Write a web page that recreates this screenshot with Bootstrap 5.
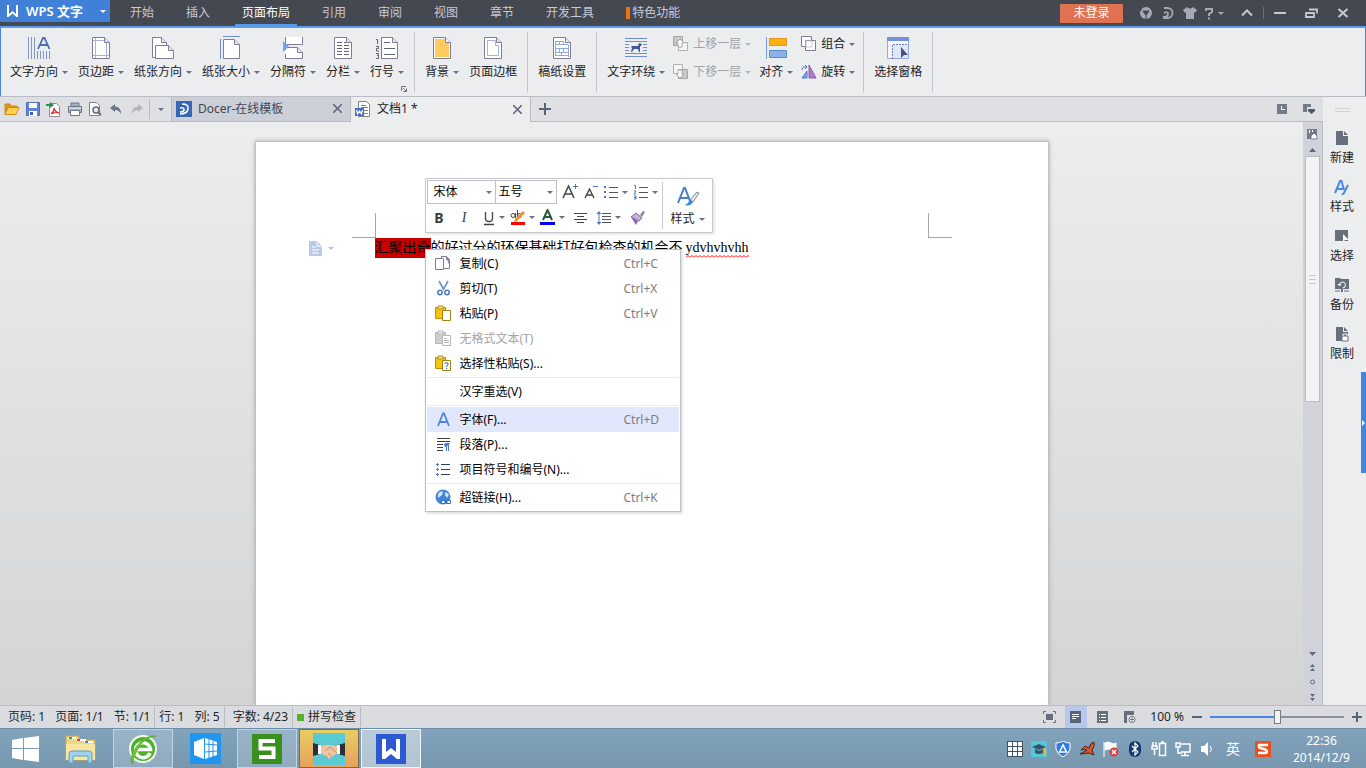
<!DOCTYPE html>
<html lang="zh-CN">
<head>
<meta charset="utf-8">
<meta name="viewport" content="width=device-width, initial-scale=1">
<title>WPS 文字 - 文档1</title>
<link href="https://cdn.jsdelivr.net/npm/bootstrap@5.3.0/dist/css/bootstrap.min.css" rel="stylesheet">
<style>
body{font:12px/20px "Noto Sans","Noto Sans CJK SC",sans-serif;color:#1e2226;background:#ebedef;overflow:hidden}
button{border:0;background:none;padding:0;color:inherit;font:inherit;white-space:nowrap}
svg{display:block;flex:none}
.caret{display:inline-block;flex:none;width:6px;height:3px;border:3px solid transparent;border-top-color:#66708a;border-bottom:0}
/* title bar */
.titlebar{background:#444851;height:28px;border-bottom:2px solid #5a9cec}
.brand{background:#4080d6;width:110px;height:22px;padding-left:6px;gap:7px;color:#fff;font-size:13px;font-weight:600}
.brand .caret,.help .caret{border-top-color:currentColor}
.menutab{color:#c5cad6;text-decoration:none;padding:0 7px;margin:0 9px;height:28px;line-height:26px;white-space:nowrap}
.menutab.active{color:#fff;border-bottom:4px solid #5a9cec}
.feature{border-left:4px solid #f0720d;padding-left:2px;line-height:12px;display:inline-block}
.login{background:#e07252;color:#fff;width:63px;height:19px;line-height:18px;border-radius:1px}
.sysicons{color:#a3a9b7}
.sysicons button{width:22px}
.winbtns{color:#c3c8d2;padding-right:7px}
.winbtns button{width:32px}
.winbtns .divided{border-left:1px solid #6a6f79;height:12px}
/* ribbon */
.ribbon{height:69px;border:solid #b9bcc3;border-width:0 0 1px;box-shadow:inset 1px 0 #4a82cc,inset -1px 0 #4a82cc}
.rgroup{display:flex;align-items:flex-start;padding:0 5px;height:60px;margin-top:4px;border-right:1px solid #c3c6cd}
.rbtn{padding:3px 5px 0}
.rbtn svg{margin:0 auto 1px}
.rlabel{display:flex;align-items:center;gap:4px}
.rstack{display:flex;flex-direction:column;margin-top:-2px}
.rsmall{display:flex;align-items:center;gap:4px;height:28px;padding:0 3px}
.off{color:#a2a4a9}
.off .caret{border-top-color:#b7b9be}
.launcher{right:7px;bottom:0}
/* document tabs */
.quickbar{background:#dee0e4;height:25px;border-bottom:1px solid #b9bcc3}
.quicktools{width:171px;padding-left:2px}
.quicktools button{width:21px;display:flex;justify-content:center}
.quicktools .vr{width:1px;height:20px;background:#b9bcc3;opacity:1;margin:0 0 0 2px}
.doctab{width:180px;height:25px;padding:0 8px 0 4px;gap:6px;border-right:1px solid #b9bcc3;border-left:1px solid #b9bcc3}
.doctab.idle{background:#cccfd7;color:#44484f;border-bottom:1px solid #b9bcc3}
.doctab.current{background:#ebedef;border-left:0}
/* workspace */
.workspace{background:linear-gradient(#ebedee,#d4d4d5);padding-top:19px}
.paper{width:794px;background:#fff;border:1px solid #bfc0c4;border-bottom:0;box-shadow:0 0 4px #aaa;padding-top:71px}
.marks{padding:0 96px;height:25px}
.marks span{width:24px;border:0 solid #a5a5a5;border-bottom-width:1px}
.marks .at-left{border-right-width:1px}
.marks .at-right{border-left-width:1px}
.docline{height:20px;padding-left:53px;font:14px/20px "Liberation Serif","Noto Sans CJK SC",serif;color:#000}
.lineicon{width:66px;display:flex;align-items:center;gap:6px}
.lineicon .caret{border-top-color:#b9c0ce}
.picked{background:#c80000}
.misspelt{margin-left:3px;background:repeat-x left bottom url("data:image/svg+xml,%3Csvg xmlns='http://www.w3.org/2000/svg' width='4' height='3'%3E%3Cpath d='M0 2.5L2 .5L4 2.5' fill='none' stroke='red'/%3E%3C/svg%3E")}
.floatbar{left:169px;top:36px;width:288px;height:55px;padding:1px;background:#fff;border:1px solid #c9c9cc;box-shadow:1px 1px 3px #0002;z-index:2}
.floatbar select{appearance:none;border:1px solid #bdc0cf;border-radius:0;height:24px;padding:0 6px;font:inherit;color:#000;background:#fff no-repeat right 3px center url("data:image/svg+xml,%3Csvg xmlns='http://www.w3.org/2000/svg' width='6' height='3'%3E%3Cpath d='M0 0h6L3 3z' fill='%2366708a'/%3E%3C/svg%3E")}
.floatbar .fontname{width:69px}
.floatbar .fontsize{width:62px;margin-left:-1px;padding-left:3px}
.barrow{gap:5px}
.barrow button{display:flex;align-items:center;gap:3px}
.barrow .glyph{width:25px;justify-content:center;font-size:14px;color:#3c3c3c}
.glyph i{font-family:"Liberation Serif",serif}
.stylebox{border-left:1px solid #c9c9cc;margin:2px 0 2px 4px;padding:1px 8px}
.ctxmenu{left:169px;top:107px;width:256px;padding:1px;background:#fff;border:1px solid #c0c0c4;box-shadow:1px 1px 3px #0003;z-index:3;color:#000}
.ctxmenu button{display:flex;align-items:center;width:100%;height:25px;padding:0 17px 0 8px;text-align:left}
.ctxmenu svg,.ctxmenu .noicon{width:17px;margin-right:8px}
.ctxmenu kbd{margin-left:auto;width:38px;padding:0;background:none;color:#7d7d7d;font:inherit}
.ctxmenu hr{margin:1px 0;border-color:#ebebee;opacity:1}
.ctxmenu .hot{background:#e1e7fd}
.ctxmenu .off{color:#a4a4a4}
/* scroll bar and task pane */
.vscroll{width:20px;background:#d1d3da;border-right:1px solid #b9bcc3;padding:7px 0 2px;color:#5f6983}
.thumb{width:15px;height:246px;background:#f4f4f4;border:1px solid #b9bcc3}
.thumb i{width:7px;height:9px;border:solid #c8c8cb;border-width:1px 0;background:linear-gradient(#c8c8cb,#c8c8cb) center/7px 1px no-repeat}
.taskpane{width:43px;gap:9px;padding:11px 5px 0 0}
.grip{width:15px;height:4px;border:solid #d0d2d7;border-width:1px 0;margin-bottom:7px}
.taskpane button{height:40px;line-height:20px}
.taskpane button svg{margin:2px auto}
.pulltab{right:0;top:275px;width:5px;height:101px;background:#4084e6}
/* status bar */
.statusbar{height:23px;background:#dbdce0;border-top:1px solid #b9bcc3;color:#22262c}
.statusbar span{white-space:nowrap}
.cell{display:flex;align-items:center;gap:10px;border-right:1px solid #b9bcc3;height:20px;padding:0 4px}
.cell.tight{gap:4px}
.view{width:22px;height:22px;display:flex;align-items:center;justify-content:center;margin-right:5px}
.view.on{background:#b7c8ea}
.zoomer{appearance:none;width:134px;height:14px;background:linear-gradient(90deg,#4a86e0 50%,#8a909e 50%) center/100% 2px no-repeat}
.zoomer::-webkit-slider-thumb{appearance:none;width:7px;height:14px;background:#f3f3f3;border:1px solid #777c86}
/* system task bar */
.taskbar{height:40px;background:linear-gradient(#82a3bd,#7797ae);border-top:1px solid #6d8ca5;color:#fff}
.app{width:60px;height:39px;display:flex;align-items:center;justify-content:center;border:1px solid transparent;margin-right:2px}
.app.start{width:51px;margin-right:0}
.app.open{background:#ffffff30;border-color:#c2d3e2}
.app.alert-app{background:linear-gradient(#e8cf63,#e8a05c);border-color:#fbe7bd;outline:1px solid #7c6a50;outline-offset:-1px}
.app.front{background:#ffffff70;border-color:#eef4f9}
.tray button{width:24px;display:flex;justify-content:center}
.tray .ime{width:28px;font-size:14px}
.clock{width:91px;line-height:17px;padding-left:2px}
</style>
<script src="https://cdn.jsdelivr.net/npm/bootstrap@5.3.0/dist/js/bootstrap.bundle.min.js"></script>
</head>
<body class="d-flex flex-column vh-100">

<header class="titlebar d-flex flex-nowrap">
  <button class="brand d-flex align-items-center"><svg width="13" height="14" viewBox="0 0 13 14"><path d="M1 1h2v9l3.500-3 3.500 3V1h2v12h-1.500L6.500 9.500 2.500 13H1z" fill="#fff"/></svg>WPS 文字<span class="caret ms-auto me-1"></span></button>
  <nav class="d-flex flex-nowrap ms-1" aria-label="功能区">
    <a class="menutab" href="#">开始</a><a class="menutab" href="#">插入</a><a class="menutab active" href="#">页面布局</a><a class="menutab" href="#">引用</a><a class="menutab" href="#">审阅</a><a class="menutab" href="#">视图</a><a class="menutab" href="#">章节</a><a class="menutab" href="#">开发工具</a><a class="menutab" href="#"><span class="feature">特色功能</span></a>
  </nav>
  <div class="d-flex align-items-center ms-auto">
    <button class="login me-2">未登录</button>
    <div class="sysicons d-flex align-items-center ms-1">
      <button aria-label="社区"><svg width="14" height="14" viewBox="0 0 14 14" class="m-auto"><circle cx="7" cy="7" r="6" fill="currentColor"/><path d="M4 5h6l-3 4.500zM1 4h2M11 3l2-1M7 10v3" fill="#444851" stroke="#444851"/></svg></button>
      <button aria-label="Docer"><svg width="14" height="14" viewBox="0 0 14 14" class="m-auto"><path d="M3 2h3.500a5 5 0 010 10H2M2 11q5 0 5-3t-4-1" fill="none" stroke="currentColor" stroke-width="1.800"/></svg></button>
      <button aria-label="皮肤"><svg width="14" height="14" viewBox="0 0 14 14" class="m-auto"><path d="M4 1l-4 3 2 3 1-1v7h8V6l1 1 2-3-4-3q-3 3-6 0z" fill="currentColor"/></svg></button>
      <button aria-label="帮助" class="help d-flex align-items-center gap-1 ms-1"><svg width="9" height="13" viewBox="0 0 9 13"><path d="M1 4V2h6v3L4 7v2M4 10.500v2" fill="none" stroke="currentColor" stroke-width="2"/></svg><span class="caret"></span></button>
    </div>
    <div class="winbtns d-flex align-items-center ms-1">
      <button aria-label="折叠"><svg width="14" height="12" viewBox="0 0 14 12" class="m-auto"><path d="M2 8.500l5-5 5 5" fill="none" stroke="currentColor" stroke-width="2"/></svg></button>
      <button aria-label="最小化" class="divided"><svg width="12" height="12" viewBox="0 0 12 12" class="m-auto"><path d="M0 6h12" stroke="currentColor" stroke-width="2"/></svg></button>
      <button aria-label="还原"><svg width="13" height="12" viewBox="0 0 13 12" class="m-auto"><path d="M4 2.500h8v4M1 6h8v4H1z" fill="none" stroke="currentColor" stroke-width="1.800"/></svg></button>
      <button aria-label="关闭"><svg width="12" height="12" viewBox="0 0 12 12" class="m-auto"><path d="M1.500 2l9 8m0-8l-9 8" stroke="currentColor" stroke-width="2.200"/></svg></button>
    </div>
  </div>
</header>

<section class="ribbon d-flex flex-nowrap flex-shrink-0" aria-label="页面布局">
  <div class="rgroup position-relative">
    <button class="rbtn"><svg width="26" height="26" viewBox="0 0 26 26"><path d="M2.500 2v22m3-22v22m3-22v22m3-8v8m3-8v8m3-8v8m3-8v8m3-8v8" stroke="#7f98cc" shape-rendering="crispEdges"/><path d="M12 14l5-11h1.500l5 11m-9.500-4h8" fill="none" stroke="#4a6fb5" stroke-width="1.800"/></svg><span class="rlabel">文字方向<span class="caret"></span></span></button>
    <button class="rbtn"><svg width="26" height="26" viewBox="0 0 26 26"><path d="M4.500 2.500h12l5 5v16h-17z" fill="#fff" stroke="#807c95"/><path d="M16.500 2.500v5h5" fill="#e4e8f8" stroke="#807c95"/><path d="M7.500 3v20m11-15v15M5 5.500h11M5 20.500h16" stroke="#9fb4e6"/></svg><span class="rlabel">页边距<span class="caret"></span></span></button>
    <button class="rbtn"><svg width="26" height="26" viewBox="0 0 26 26"><path d="M2.500 2.500h9l5 5v15h-14z" fill="#fff" stroke="#807c95"/><path d="M11.500 2.500v5h5" fill="#e4e8f8" stroke="#807c95"/><path d="M5.500 10.500h13l5 5v8h-18z" fill="#fff" stroke="#807c95"/><path d="M18.500 10.500v5h5" fill="#e4e8f8" stroke="#807c95"/></svg><span class="rlabel">纸张方向<span class="caret"></span></span></button>
    <button class="rbtn"><svg width="26" height="26" viewBox="0 0 26 26"><path d="M5 1.500h17M2.500 4v20" stroke="#6d90d8"/><path d="M5.500 4.500h11l5 5v14h-16z" fill="#fff" stroke="#807c95"/><path d="M16.500 4.500v5h5" fill="#e4e8f8" stroke="#807c95"/></svg><span class="rlabel">纸张大小<span class="caret"></span></span></button>
    <button class="rbtn"><svg width="26" height="26" viewBox="0 0 26 26"><path d="M5.500 2v7.500h17V2M5.500 15V12.500h12l5 5v6h-17V19" fill="#fff" stroke="#807c95"/><path d="M17.500 12.500v5h5" fill="#e4e8f8" stroke="#807c95"/><path d="M3 6v11l6-5.500z" fill="#7b9fe8"/></svg><span class="rlabel">分隔符<span class="caret"></span></span></button>
    <button class="rbtn"><svg width="26" height="26" viewBox="0 0 26 26"><path d="M4.500 2.500h12l5 5v16h-17z" fill="#fff" stroke="#807c95"/><path d="M16.500 2.500v5h5" fill="#e4e8f8" stroke="#807c95"/><path d="M7 7.500h5m2 0h2m-9 3h5m2 0h5m-12 3h5m2 0h5m-12 3h5m2 0h5m-12 3h5m2 0h5" stroke="#5d6474"/></svg><span class="rlabel">分栏<span class="caret"></span></span></button>
    <button class="rbtn"><svg width="26" height="26" viewBox="0 0 26 26"><path d="M7.500 2.500h11l5 5v16h-16z" fill="#fff" stroke="#807c95"/><path d="M18.500 2.500v5h5" fill="#e4e8f8" stroke="#807c95"/><path d="M10 7.500h6m-6 6h11m-11 6h11M2 4.500h1.500V9M2 11.500h2.500v2h-2V16H5m-3 2.500h2.500v2H3m1.500 0v3H2" fill="none" stroke="#5d6474"/></svg><span class="rlabel">行号<span class="caret"></span></span></button>
    <button class="launcher position-absolute" aria-label="页面设置"><svg width="6" height="6" viewBox="0 0 6 6"><path d="M.5 5V.5H5M2 2l3.500 3.500m0-3v3h-3" fill="none" stroke="#6a7386"/></svg></button>
  </div>
  <div class="rgroup">
    <button class="rbtn"><svg width="26" height="26" viewBox="0 0 26 26"><path d="M4.500 2.500h12l5 5v16h-17z" fill="#fff" stroke="#807c95"/><path d="M6 4h10v4h4v14H6z" fill="#ffcb60"/><path d="M16.500 2.500v5h5" fill="#fff" stroke="#807c95"/></svg><span class="rlabel">背景<span class="caret"></span></span></button>
    <button class="rbtn"><svg width="26" height="26" viewBox="0 0 26 26"><path d="M4.500 2.500h12l5 5v16h-17z" fill="#fff" stroke="#807c95"/><path d="M7.500 5.500h8v5h3v10h-11z" fill="none" stroke="#9fb4e6"/><path d="M16.500 2.500v5h5" fill="#e4e8f8" stroke="#807c95"/></svg><span class="rlabel">页面边框</span></button>
  </div>
  <div class="rgroup">
    <button class="rbtn"><svg width="26" height="26" viewBox="0 0 26 26"><path d="M4.500 2.500h12l5 5v16h-17z" fill="#fff" stroke="#807c95"/><path d="M16.500 2.500v5h5" fill="#e4e8f8" stroke="#807c95"/><path d="M6.500 6.500h8m-8 3h13m-13 4h13m-13 4h13m-13 3h13M6.500 6v15m4-15v4m0 4v3m4-11v4m0 4v3m5-7v12m-7-4v3m-2-10" fill="none" stroke="#90a8de"/></svg><span class="rlabel">稿纸设置</span></button>
  </div>
  <div class="rgroup">
    <button class="rbtn"><svg width="26" height="26" viewBox="0 0 26 26"><path d="M2 3.500h22M2 6.500h22M2 9.500h4m14 0h4M2 12.500h4m14 0h4M2 15.500h4m14 0h4M2 18.500h22M2 21.500h22" stroke="#6f8fce"/><path d="M8 12l1-1h6l1-3 3 1-2 3v5h-1l-1-3h-4l-2 3H8l1-4z" fill="#3c5a98"/></svg><span class="rlabel">文字环绕<span class="caret"></span></span></button>
    <div class="rstack">
      <button class="rsmall off" disabled><svg width="16" height="16" viewBox="0 0 16 16"><path d="M.5.500h9v9h-9z" fill="#c7c8ca" stroke="#a6a6aa"/><path d="M5.500 6.500h9v8h-9z" fill="#f5f5f5" stroke="#b0b0b4"/><path d="M7 3l4 4H9v4H5V7H3z" fill="#fff" stroke="#a6a6aa"/></svg>上移一层<span class="caret"></span></button>
      <button class="rsmall off" disabled><svg width="16" height="16" viewBox="0 0 16 16"><path d="M.5.500h9v9h-9z" fill="#f5f5f5" stroke="#b0b0b4"/><path d="M5.500 5.500h9v9h-9z" fill="#c7c8ca" stroke="#a6a6aa"/><path d="M7 14l4-4H9V6H5v4H3z" fill="#fff" stroke="#a6a6aa"/></svg>下移一层<span class="caret"></span></button>
    </div>
    <button class="rbtn"><svg width="26" height="26" viewBox="0 0 26 26"><path d="M3.500 2v22" stroke="#7b9ad6"/><path d="M6.500 3.500h17v7h-17z" fill="#ffb010" stroke="#e8941c"/><path d="M6.500 15.500h17v7h-17z" fill="#8ab2e6" stroke="#5a8cc8"/></svg><span class="rlabel">对齐<span class="caret"></span></span></button>
    <div class="rstack">
      <button class="rsmall"><svg width="16" height="16" viewBox="0 0 16 16"><path d="M.5.500h10v10H.5zM4.500 4.500h10v10h-10z" fill="#fff" stroke="#7c7b92"/><path d="M5 5h6v6H5z" fill="#fff" stroke="#c8c8d4"/></svg>组合<span class="caret"></span></button>
      <button class="rsmall"><svg width="16" height="16" viewBox="0 0 16 16"><path d="M8 1v13h7z" fill="#b578cc" stroke="#9060ae"/><path d="M6 7v7H1z" fill="#7eaae8" stroke="#4a7cc4"/><path d="M1 6q0-4 4-3m-1-2l2 2-2 2" fill="none" stroke="#3c76c4"/></svg>旋转<span class="caret"></span></button>
    </div>
  </div>
  <div class="rgroup">
    <button class="rbtn"><svg width="26" height="26" viewBox="0 0 26 26"><path d="M2.500 2.500h21v21h-21z" fill="#f4f6fc" stroke="#98acdc"/><path d="M2 2h22v4H2z" fill="#7292d6"/><path d="M7 10h16v13H7z" fill="#dfe7fa"/><path d="M7.500 24V9.500H24" fill="none" stroke="#6a84c0" stroke-dasharray="2 1"/><path d="M16 12v11l3-3h4z" fill="#46557e"/></svg><span class="rlabel">选择窗格</span></button>
  </div>
</section>

<div class="d-flex flex-grow-1 overflow-hidden position-relative">
  <div class="d-flex flex-column flex-grow-1">
    <div class="quickbar d-flex align-items-center flex-shrink-0">
      <div class="quicktools d-flex align-items-center flex-shrink-0">
        <button aria-label="打开"><svg width="16" height="14" viewBox="0 0 16 14"><path d="M1 12V2h5l1 2h6v2" fill="#d99a1c" stroke="#c88a14"/><path d="M1 12.500l3-7h11l-3 7z" fill="#ffd050" stroke="#cf9018"/></svg></button>
        <button aria-label="保存"><svg width="14" height="14" viewBox="0 0 14 14"><path d="M.5.500h13v13H.5z" fill="#6584d4" stroke="#4f6ec0"/><path d="M3 1h8v5H3zM3 9h8v5H3z" fill="#fff"/><path d="M4 10h3v3H4z" fill="#3f60b4"/></svg></button>
        <button aria-label="输出为PDF"><svg width="15" height="15" viewBox="0 0 15 15"><path d="M3.500 1.500h7l3 3v10h-10z" fill="#fff" stroke="#8d8f9a"/><path d="M5 12q3-2 3-6 1 4 5 5-4-1-8 1" fill="none" stroke="#dc3838" stroke-width="1.300"/><path d="M0 2h4V0l4 3-4 3V4H0z" fill="#2f8c50"/></svg></button>
        <button aria-label="打印"><svg width="14" height="14" viewBox="0 0 14 14"><path d="M3 1h8v4H3zM.5 4.500h13v6H.5z" fill="#a7afbf" stroke="#6c768a"/><path d="M1 6h12" stroke="#fff"/><path d="M2.500 8.500h9v5h-9z" fill="#fff" stroke="#6c768a"/></svg></button>
        <button aria-label="打印预览"><svg width="14" height="14" viewBox="0 0 14 14"><path d="M1.500.500h7l3 3v10h-10z" fill="#fff" stroke="#80838e"/><circle cx="8" cy="8" r="3" fill="#e8ebf0" stroke="#666b78" stroke-width="1.500"/><path d="M10 10l3 3" stroke="#666b78" stroke-width="2"/></svg></button>
        <button aria-label="撤销"><svg width="12" height="12" viewBox="0 0 12 12"><path d="M0 5l5-4v2.500q6 0 6 7.500-2-4-6-4v2z" fill="#6c7689"/></svg></button>
        <button aria-label="恢复"><svg width="12" height="12" viewBox="0 0 12 12"><path d="M12 5L7 1v2.500q-6 0-6 7.500 2-4 6-4v2z" fill="#b0b4bc"/></svg></button>
        <span class="vr"></span>
        <button aria-label="自定义"><span class="caret"></span></button>
      </div>
      <div class="doctab idle d-flex align-items-center"><svg width="16" height="16" viewBox="0 0 16 16"><path d="M0 0h16v16H0z" fill="#3766b4"/><path d="M6 3q7 0 6 5t-8 5M4 11q4 0 4-2.500T4 7" fill="none" stroke="#fff" stroke-width="1.600"/></svg><span>Docer-在线模板</span><button class="ms-auto" aria-label="关闭"><svg width="9" height="9" viewBox="0 0 9 9"><path d="M0 0l9 9M9 0L0 9" stroke="#5a6274" stroke-width="1.500"/></svg></button></div>
      <div class="doctab current d-flex align-items-center"><svg width="16" height="16" viewBox="0 0 16 16"><path d="M3.500.500h8l3 3v12h-11z" fill="#fff" stroke="#80838e"/><path d="M6 4.500h5m-5 2h7m-4 3h4m-4 3h4" stroke="#80838e"/><path d="M0 7h9v8H0z" fill="#3f6dc0"/><path d="M1.500 9l1 4 2-3 2 3 1-4" fill="none" stroke="#fff" stroke-width="1.300"/></svg><span>文档1 *</span><button class="ms-auto" aria-label="关闭"><svg width="9" height="9" viewBox="0 0 9 9"><path d="M0 0l9 9M9 0L0 9" stroke="#5a6274" stroke-width="1.500"/></svg></button></div>
      <button class="ms-2" aria-label="新建标签"><svg width="12" height="12" viewBox="0 0 12 12"><path d="M6 0v12M0 6h12" stroke="#5a6274" stroke-width="2"/></svg></button>
      <div class="d-flex ms-auto me-2 gap-3">
        <button aria-label="历史"><svg width="10" height="10" viewBox="0 0 10 10"><path d="M0 0h10v10H0z" fill="#747c8c"/><path d="M4.500 2v3.500H8" fill="none" stroke="#fff"/></svg></button>
        <button aria-label="标签列表"><svg width="12" height="10" viewBox="0 0 12 10"><path d="M0 0h8v3H4v5H0z" fill="#747c8c"/><path d="M5 5h7v2L8.500 10 5 7z" fill="#4f5a70"/></svg></button>
      </div>
    </div>
    <div class="d-flex flex-grow-1 overflow-hidden">
      <main class="workspace d-flex flex-grow-1 justify-content-center">
        <article class="paper position-relative flex-shrink-0">
          <div class="marks d-flex justify-content-between"><span class="at-left"></span><span class="at-right"></span></div>
          <div class="docline d-flex">
            <span class="lineicon"><svg width="13" height="15" viewBox="0 0 13 15"><path d="M0 0h8l5 5v10H0z" fill="#b9cbe6"/><path d="M8 0v5h5M3 6h4m-4 3h7m-7 3h7" fill="none" stroke="#fff"/></svg><span class="caret"></span></span>
            <span class="picked">汇聚出奇</span><span>的好过分的环保基础打好包检查的机会不</span><span class="misspelt">ydvhvhvhh</span>
          </div>

          <div class="floatbar position-absolute d-flex">
            <div class="d-flex flex-column">
              <div class="barrow d-flex align-items-center">
                <div class="d-flex"><select class="fontname" aria-label="字体"><option>宋体</option></select><select class="fontsize" aria-label="字号"><option>五号</option></select></div>
                <button aria-label="增大字号"><svg width="17" height="18" viewBox="0 0 17 18"><path d="M1 15L6.500 3 12 15M3 11h7" fill="none" stroke="#444" stroke-width="1.500"/><path d="M13.500 1v5M11 3.500h5" stroke="#4a78c8"/></svg></button>
                <button aria-label="减小字号"><svg width="14" height="18" viewBox="0 0 14 18"><path d="M1 15L5.500 6 10 15M2.500 12h6" fill="none" stroke="#444" stroke-width="1.400"/><path d="M9 3.500h5" stroke="#4a78c8"/></svg></button>
                <button aria-label="项目符号"><svg width="16" height="16" viewBox="0 0 16 16"><path d="M6 3.500h9M6 8.500h9M6 13.500h9" stroke="#555"/><path d="M1 2h2v2H1zM1 7h2v2H1zM1 12h2v2H1z" fill="#4a78c8"/></svg><span class="caret"></span></button>
                <button aria-label="编号"><svg width="16" height="16" viewBox="0 0 16 16"><path d="M6 3.500h9M6 8.500h9M6 13.500h9" stroke="#555"/><path d="M1 1.500h1.500V5M1 7h2l-2 3h2M1 12h2v3H1m0-1.500h2" fill="none" stroke="#4a78c8"/></svg><span class="caret"></span></button>
              </div>
              <div class="barrow d-flex align-items-center flex-grow-1">
                <div class="d-flex"><button class="glyph"><b>B</b></button><button class="glyph"><i>I</i></button></div>
                <button aria-label="下划线"><svg width="14" height="16" viewBox="0 0 14 16"><path d="M3.500 2v6.500q0 3 3.500 3t3.500-3V2M2 14.500h10" fill="none" stroke="#444" stroke-width="1.300"/></svg><span class="caret"></span></button>
                <button aria-label="突出显示"><svg width="16" height="18" viewBox="0 0 16 18"><circle cx="3" cy="6.500" r="2" fill="none" stroke="#444"/><path d="M5.500 4v5M7.500 1v8" stroke="#444"/><circle cx="9.500" cy="6.500" r="2" fill="none" stroke="#444"/><path d="M13 2l2 2-8 8-3 1 1-3z" fill="#f09030"/><path d="M1 13h14v3H1z" fill="#f00"/></svg><span class="caret"></span></button>
                <button aria-label="字体颜色"><svg width="16" height="18" viewBox="0 0 16 18"><path d="M3 11L7.500 1 12 11M4.500 8h6" fill="none" stroke="#2b5a34" stroke-width="2"/><path d="M0 13h15v3H0z" fill="#00f"/></svg><span class="caret"></span></button>
                <button aria-label="居中" class="mx-1"><svg width="13" height="14" viewBox="0 0 13 14"><path d="M0 2.500h13M3 5.500h7M0 8.500h13M3 11.500h7" stroke="#444"/></svg></button>
                <button aria-label="行距"><svg width="16" height="14" viewBox="0 0 16 14"><path d="M6 2.500h9M6 5.500h9M6 8.500h9M6 11.500h9" stroke="#555"/><path d="M3 0l2.500 3h-5zM3 14l2.500-3h-5zM2.500 3h1v8h-1z" fill="#4a78c8"/></svg><span class="caret"></span></button>
                <button aria-label="格式刷" class="ms-1"><svg width="15" height="15" viewBox="0 0 15 15"><path d="M10 5l3-4 2 1-3 5z" fill="#8b8299"/><path d="M1 7l5-4 6 5-3 3z" fill="#c9aee0" stroke="#80709a"/><path d="M1 7l7 4-2 4z" fill="#8563b0"/></svg></button>
              </div>
            </div>
            <button class="stylebox"><svg width="24" height="26" viewBox="0 0 24 26" class="m-auto"><path d="M2 20L8 5h1l5 13M4.500 15h8" fill="none" stroke="#4a7ad0" stroke-width="2"/><path d="M21 9l2 1-6 9-3-2z" fill="#dfe7f2" stroke="#7e8798"/><path d="M14 16l3 3q-3 5-8 3 3-1 5-6" fill="#3d8ed0"/></svg><span class="d-flex align-items-center gap-1">样式<span class="caret"></span></span></button>
          </div>

          <div class="ctxmenu position-absolute" role="menu">
            <button><svg width="17" height="17" viewBox="0 0 17 17"><path d="M6.500 1.500h5l3 3v9h-8z" fill="#fff" stroke="#807c95"/><path d="M11.500 1.500v3h3v5z" fill="#dfe4f6" stroke="#807c95"/><path d="M.5 3.500h8v11h-8z" fill="#fff" stroke="#807c95"/></svg>复制(C)<kbd>Ctrl+C</kbd></button>
            <button><svg width="17" height="17" viewBox="0 0 17 17"><path d="M4 1l5 9m4-9l-5 9" stroke="#6f93c6" stroke-width="1.600"/><circle cx="5" cy="12.500" r="2.200" fill="none" stroke="#4c7cc0" stroke-width="1.500"/><circle cx="12" cy="12.500" r="2.200" fill="none" stroke="#4c7cc0" stroke-width="1.500"/></svg>剪切(T)<kbd>Ctrl+X</kbd></button>
            <button><svg width="17" height="17" viewBox="0 0 17 17"><path d="M.5 2.500h10v11H.5z" fill="#f7c40c" stroke="#bb8e10"/><path d="M3 1h5v3H3z" fill="#efe1a6" stroke="#bb8e10"/><path d="M7.500 5.500h8v10h-8z" fill="#fff" stroke="#a88118"/></svg>粘贴(P)<kbd>Ctrl+V</kbd></button>
            <button class="off" disabled><svg width="17" height="17" viewBox="0 0 17 17"><path d="M.5 2.500h10v11H.5z" fill="#cfcfcf" stroke="#b5b5b5"/><path d="M3 1h5v3H3z" fill="#eee" stroke="#b5b5b5"/><path d="M7.500 5.500h8v10h-8z" fill="#fff" stroke="#b5b5b5"/><path d="M9 8.500h3m-3 2h5m-5 2h5" stroke="#b5b5b5"/></svg>无格式文本(T)</button>
            <button><svg width="17" height="17" viewBox="0 0 17 17"><path d="M.5 2.500h10v11H.5z" fill="#f7c40c" stroke="#bb8e10"/><path d="M3 1h5v3H3z" fill="#efe1a6" stroke="#bb8e10"/><path d="M7.500 5.500h8v10h-8z" fill="#fff" stroke="#a88118"/><path d="M10 9V8h3v2l-1.500 1v1m0 1v1" fill="none" stroke="#3f63b8"/></svg>选择性粘贴(S)...</button>
            <hr>
            <button><span class="noicon"></span>汉字重选(V)</button>
            <hr>
            <button class="hot"><svg width="17" height="17" viewBox="0 0 17 17"><path d="M3 15L8 2.500h1L14 15M4.500 11h8" fill="none" stroke="#4f86e0" stroke-width="1.800"/></svg>字体(F)...<kbd>Ctrl+D</kbd></button>
            <button><svg width="17" height="17" viewBox="0 0 17 17"><path d="M2 2.500h13M2 5.500h13M2 8.500h6m-6 3h6m-6 3h6" stroke="#3a3f4a"/><path d="M11.500 15V8m2 7V8" stroke="#4f7ad0"/><path d="M15 7h-4q-2 0-2 2t2.500 2z" fill="#4f7ad0"/></svg>段落(P)...</button>
            <button><svg width="17" height="17" viewBox="0 0 17 17"><path d="M6 3.500h9M6 8.500h9M6 13.500h9" stroke="#3a3f4a"/><path d="M1 3.500h3M2.500 2v3M1 8.500h3M2.500 7v3M1 13.500h3M2.500 12v3" stroke="#4f7ad0"/></svg>项目符号和编号(N)...</button>
            <hr>
            <button><svg width="17" height="17" viewBox="0 0 17 17"><circle cx="8" cy="8" r="7.500" fill="#4385d8"/><path d="M3 5q3-4 5-2l-1 3-4 3zM10 3l4 2-2 4-2-3z" fill="#cfe7fb"/><path d="M6.500 11.500h4v3h-4zM11.500 11.500h4v3h-4zM9 13h4" fill="#fff" stroke="#376fb6"/></svg>超链接(H)...<kbd>Ctrl+K</kbd></button>
          </div>
        </article>
      </main>
      <div class="vscroll d-flex flex-column align-items-center flex-shrink-0">
        <svg width="11" height="11" viewBox="0 0 11 11"><path d="M0 0h10v10H0z" fill="#747c8c"/><path d="M2.500 1v3m3-3v2" stroke="#fff"/><path d="M4 10V7l3-3 3 3v3z" fill="#fff" stroke="#747c8c"/></svg>
        <svg width="7" height="16" viewBox="0 0 7 16"><path d="M0 12l3.500-4L7 12z" fill="currentColor"/></svg>
        <div class="thumb d-flex align-items-center justify-content-center flex-shrink-0"><i></i></div>
        <svg class="mt-auto" width="7" height="54" viewBox="0 0 7 54"><path d="M0 3h7L3.500 7zM1 18l2.500-3L6 18zM1 22l2.500-3L6 22zM1 45h5l-2.500 3zM1 49h5l-2.500 3z" fill="currentColor"/><circle cx="3.500" cy="33" r="2" fill="none" stroke="currentColor"/></svg>
      </div>
    </div>
  </div>
  <aside class="taskpane d-flex flex-column align-items-center flex-shrink-0">
    <span class="grip"></span>
    <button><svg width="14" height="16" viewBox="0 0 14 16"><path d="M1 1h7v5h5v9H1z" fill="#676e7c"/><path d="M9 1l4 4H9z" fill="#676e7c"/></svg>新建</button>
    <button><svg width="16" height="16" viewBox="0 0 16 16"><path d="M1 14L6 2h1.500l2.500 9M3 10h7" fill="none" stroke="#4f86e8" stroke-width="2"/><path d="M14 6l-4 8m-2 2l2-2" stroke="#4f86e8" stroke-width="2"/></svg>样式</button>
    <button><svg width="14" height="16" viewBox="0 0 14 16"><path d="M0 2h13v11H0z" fill="#676e7c"/><path d="M8 6v8l2-2h4z" fill="#fff"/></svg>选择</button>
    <button><svg width="14" height="16" viewBox="0 0 14 16"><path d="M0 1h5l1 1h8v10H0zM0 13.500h5v1H0zM9 13.500h5v1H9zM6 12h2v3H6z" fill="#676e7c"/><path d="M4.500 8.500a3 3 0 113 2.500M3 7l1.500 2L6 7" fill="none" stroke="#fff"/></svg>备份</button>
    <button><svg width="14" height="16" viewBox="0 0 14 16"><path d="M1 1h7v5h5v9H1zM9 1l4 4H9z" fill="#676e7c"/><path d="M7 10h6v5H7z" fill="#fff" stroke="#676e7c"/><path d="M8 10V8h4v2" fill="none" stroke="#fff"/></svg>限制</button>
  </aside>
  <button class="pulltab position-absolute" aria-label="展开"><svg width="4" height="6" viewBox="0 0 4 6"><path d="M1 0l3 3-3 3z" fill="#fff"/></svg></button>
</div>

<footer class="statusbar d-flex align-items-center flex-shrink-0">
  <div class="cell ps-2"><span>页码: 1</span><span>页面: 1/1</span><span>节: 1/1</span></div>
  <div class="cell"><span>行: 1</span><span>列: 5</span></div>
  <div class="cell ps-2"><span>字数: 4/23</span></div>
  <div class="cell tight"><svg width="7" height="7"><path d="M0 0h7v7H0z" fill="#55b030"/></svg><span>拼写检查</span></div>
  <div class="d-flex align-items-center ms-auto">
    <button class="view" aria-label="全屏"><svg width="13" height="12" viewBox="0 0 13 12"><path d="M.5 3V.500H3m7 0h2.500V3m0 6v2.500H10m-7 0H.5V9" fill="none" stroke="#676e7c"/><path d="M3 3h7v6H3z" fill="#676e7c"/></svg></button>
    <button class="view on" aria-label="页面视图"><svg width="12" height="12" viewBox="0 0 12 12"><path d="M0 0h11v12H0z" fill="#596579"/><path d="M2 3.500h7m-7 2h7m-7 2h4" stroke="#fff"/></svg></button>
    <button class="view" aria-label="大纲"><svg width="12" height="12" viewBox="0 0 12 12"><path d="M0 0h11v12H0z" fill="#676e7c"/><path d="M2 3.500h1m1 0h5M2 6.500h1m1 0h5M2 9.500h1m1 0h5" stroke="#fff"/></svg></button>
    <button class="view" aria-label="Web版式"><svg width="12" height="12" viewBox="0 0 12 12"><path d="M0 0h10v4H3v8H0z" fill="#676e7c"/><circle cx="8" cy="8.500" r="3" fill="#fff" stroke="#676e7c"/><path d="M6 8.500h4M8 6.500v4" stroke="#676e7c"/></svg></button>
    <span class="ms-1">100 %</span>
    <button class="ms-2" aria-label="缩小"><svg width="10" height="10"><path d="M0 5h10" stroke="#5a6274" stroke-width="2"/></svg></button>
    <input class="zoomer mx-2" type="range" min="0" max="200" value="100" aria-label="显示比例">
    <button class="me-1" aria-label="放大"><svg width="10" height="10" viewBox="0 0 10 10"><path d="M0 5h10M5 0v10" stroke="#5a6274" stroke-width="2"/></svg></button>
  </div>
</footer>

<footer class="taskbar d-flex align-items-center flex-shrink-0">
  <button class="app start" aria-label="开始"><svg width="28" height="26" viewBox="0 0 28 26"><path d="M0 4l11-2v10H0zM12 2l15-2v12H12zM0 13h11v11L0 22zM12 13h15v13l-15-2z" fill="#fff"/></svg></button>
  <button class="app" aria-label="资源管理器"><svg width="34" height="30" viewBox="0 0 34 30"><path d="M2 2h13v4h16v20H2z" fill="#f0d680" stroke="#caa54c"/><path d="M4 3h8v2H4zM12 5h10v2H12zM20 7h9v2h-9z" fill="#fff"/><path d="M5 3h3v2H5z" fill="#38a040"/><path d="M13 5h3v2h-3z" fill="#d84820"/><path d="M21 7h3v2h-3z" fill="#3088d0"/><path d="M2 10h29v16H2z" fill="#f8e6a0"/><path d="M5 29V20q0-3 3-3h17q3 0 3 3v9h-4v-7H9v7z" fill="#a0d4ee" stroke="#58a0cc"/></svg></button>
  <button class="app open" aria-label="浏览器"><svg width="30" height="32" viewBox="0 0 30 32"><circle cx="15" cy="16" r="14" fill="#f2faee"/><circle cx="15" cy="16" r="12" fill="#4cb32c"/><path d="M22 20a7.500 7.500 0 11.500-3.500H9" fill="none" stroke="#fff" stroke-width="3.500"/><path d="M4 31Q1 24 9 13T28 3Q17 4 11 14T4 31" fill="#7cc83c" stroke="#5cae2c"/></svg></button>
  <button class="app" aria-label="应用"><svg width="31" height="31" viewBox="0 0 31 31"><path d="M0 0h31v31H0z" fill="#2196f0"/><path d="M4 9l10-4v21L4 22z" fill="#fff"/><path d="M15 5l12 4v13l-12 4z" fill="#fff"/><path d="M15 11l12 1M15 19l12-1M19 6v19M23 8v17" stroke="#2196f0"/></svg></button>
  <button class="app open" aria-label="WPS表格"><svg width="30" height="30" viewBox="0 0 30 30"><path d="M0 0h30v30H0z" fill="#38901e"/><path d="M23 7H8.500v7.500h13V23H7" fill="none" stroke="#fff" stroke-width="4"/></svg></button>
  <button class="app alert-app" aria-label="握手"><svg width="32" height="32" viewBox="0 0 32 32"><path d="M0 0h32v32H0z" fill="#59cad3"/><path d="M0 10l7 2v9l-7 2zM32 10l-7 2v9l7 2z" fill="#2b3038"/><path d="M5 12h3v9H5zM24 12h3v9h-3z" fill="#fff"/><path d="M8 13l7-1 9 1v7l-8 6-8-6z" fill="#f4c4a2"/><path d="M12 18l5-4 7 6m-12 2l3 3m0-5l4 4" fill="none" stroke="#c88e70"/></svg></button>
  <button class="app front" aria-label="WPS文字"><svg width="30" height="30" viewBox="0 0 30 30"><path d="M0 0h30v30H0z" fill="#2d5ad0"/><path d="M6 5h4v13l5-4 5 4V5h4v20h-3l-6-5-6 5H6z" fill="#fff"/></svg></button>
  <div class="tray d-flex align-items-center ms-auto">
    <button aria-label="托盘"><svg width="16" height="16" viewBox="0 0 16 16"><path d="M0 0h16v16H0z" fill="#3e5265"/><path d="M1 1h4v4H1zM6 1h4v4H6zM11 1h4v4h-4zM1 6h4v4H1zM6 6h4v4H6zM11 6h4v4h-4zM1 11h4v4H1zM6 11h4v4H6zM11 11h4v4h-4z" fill="#fff"/></svg></button>
    <button aria-label="学习"><svg width="16" height="16" viewBox="0 0 16 16"><path d="M0 0h16v16H0z" fill="#4fc8de"/><path d="M1 6l7-3 7 3-7 3zM4 8v4q4 2 8 0V8L8 10z" fill="#3f5262"/><path d="M14 7v8" stroke="#f0b040" stroke-width="2"/></svg></button>
    <button aria-label="安全"><svg width="16" height="16" viewBox="0 0 16 16"><path d="M1 2q4 0 7-2 3 2 7 2v6q-1 5-7 8-6-3-7-8z" fill="#2f7be4" stroke="#fff"/><path d="M4.500 11L8 4l3.500 7z" fill="none" stroke="#fff" stroke-width="1.600"/></svg></button>
    <button aria-label="蝴蝶"><svg width="17" height="16" viewBox="0 0 17 16"><path d="M15 1q1 5-2 8l2 5-5-2-9 1 7-4Q4 8 2 9l4-4 4 2q1-5 5-6" fill="#d4562c" stroke="#4c2320"/></svg></button>
    <button aria-label="操作中心"><svg width="16" height="16" viewBox="0 0 16 16"><path d="M1 1v15M2 2q3-2 6 0t5 0v7q-3 2-5 0t-6 0z" fill="#fff" stroke="#fff"/><circle cx="11" cy="11" r="4.500" fill="#dd3c3c"/><path d="M9 9l4 4m0-4l-4 4" stroke="#fff" stroke-width="1.500"/></svg></button>
    <button aria-label="蓝牙"><svg width="12" height="16" viewBox="0 0 12 16"><rect width="12" height="16" rx="6" fill="#12386c"/><path d="M3 5l6 6-3 3V2l3 3-6 6" fill="none" stroke="#fff" stroke-width="1.200"/></svg></button>
    <button aria-label="电源"><svg width="16" height="16" viewBox="0 0 16 16"><path d="M8.500 2.500h6v12h-6zM10 1h3M2 1v4m3-4v4M1 5h5v3H1zM3.500 8v6" fill="none" stroke="#fff" stroke-width="1.500"/></svg></button>
    <button aria-label="网络"><svg width="16" height="16" viewBox="0 0 16 16"><path d="M6 3h9v8H6M10 11v3m-4 .500h8M1 2h4v4H1zM3 6v6h4" fill="none" stroke="#fff" stroke-width="1.500"/></svg></button>
    <button aria-label="音量"><svg width="14" height="16" viewBox="0 0 14 16"><path d="M1 5h3l4-4v14l-4-4H1z" fill="#fff"/><path d="M10 5q3 3 0 6" fill="none" stroke="#fff"/></svg></button>
    <button class="ime">英</button>
    <button class="ms-1" aria-label="搜狗"><svg width="16" height="16" viewBox="0 0 16 16"><path d="M0 0h16v16H0z" fill="#e8501c"/><path d="M13 4H4q-1 3 3 3.500t5 3Q12 12 10 12H3" fill="none" stroke="#fff" stroke-width="2.400"/></svg></button>
    <div class="clock text-center">22:36<br>2014/12/9</div>
  </div>
</footer>
</body>
</html>
